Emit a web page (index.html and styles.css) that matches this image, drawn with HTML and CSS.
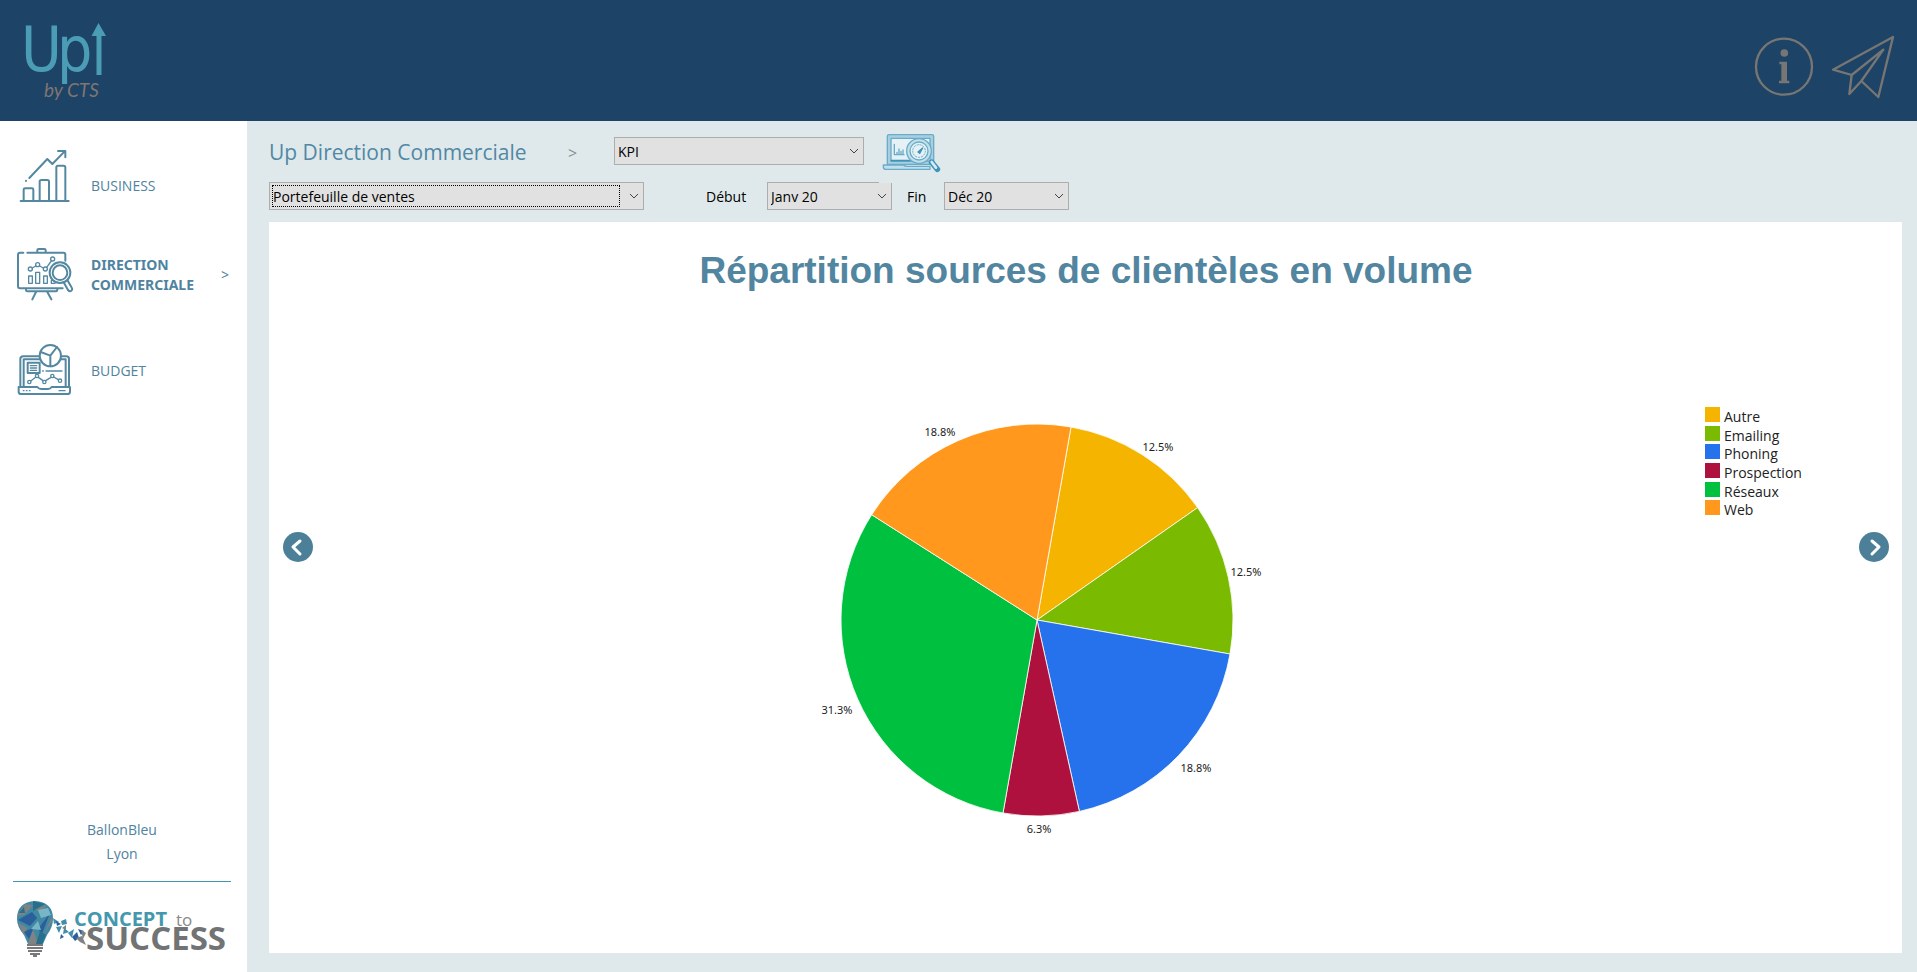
FILE: index.html
```html
<!DOCTYPE html>
<html lang="fr">
<head>
<meta charset="utf-8">
<title>Up Direction Commerciale</title>
<link rel="stylesheet" href="styles.css">
</head>
<body>
<div class="app">
  <header class="topbar">
    <a class="brand" href="#" aria-label="Up by CTS">
      <svg width="98" height="105" viewBox="12 5 98 105">
        <text class="brand-name" x="21" y="71">U</text>
        <text class="brand-name" x="57" y="71">p</text>
        <path class="brand-arrow" d="M98.500 23L106 36H101.500V75H96.500V36H91.500Z"/>
        <text class="brand-sub" x="44" y="97">by CTS</text>
      </svg>
    </a>
    <div class="topbar-actions">
      <button class="icon-button" type="button" aria-label="Informations">
        <svg width="60" height="62" viewBox="111 106 180 186">
          <circle cx="201" cy="198" r="84" fill="none" stroke="#777674" stroke-width="7"/>
          <circle cx="202" cy="157" r="11.500" fill="#777674"/>
          <path fill="#777674" d="M187 183H210V240H217V248H186V240H193V191H187Z"/>
        </svg>
      </button>
      <button class="icon-button" type="button" aria-label="Envoyer">
        <svg width="64" height="64" viewBox="339 102 192 192" fill="none" stroke="#777674" stroke-width="7" stroke-linejoin="round" stroke-linecap="round">
          <path d="M345 206L525 108L481 288L430 240L496 146L401 222ZM401 222L394 279L430 240"/>
        </svg>
      </button>
    </div>
  </header>

  <aside class="sidebar">
    <nav class="nav">
      <a class="nav-item nav-item-low" href="#">
        <svg class="nav-icon" width="55" height="58" viewBox="48 66 165 174">
          <path d="M62 228H206M71 227V194Q71 190 75 190H96Q100 190 100 194V227M119 227V170Q119 165 124 165H142Q147 165 147 170V227M169 227V127Q169 122 174 122H191Q196 122 196 127V227"/>
          <path d="M88 159L142 102L157 117L194 79M174 78H196V97M78 168V167"/>
        </svg>
        <span>BUSINESS</span>
      </a>
      <a class="nav-item nav-item-active" href="#" aria-current="page">
        <svg class="nav-icon" width="58" height="56" viewBox="48 364 174 168">
          <path d="M70 384H60Q54 384 54 390V485Q54 491 60 491H188M82 384H190Q196 384 196 390V408M112 383V377Q112 373 116 373H133Q137 373 137 377V383M78 491V496Q78 500 82 500H168Q172 500 172 493M108 502L97 524M142 502L154 524"/>
          <g stroke-width="4">
            <circle cx="91" cy="433" r="6"/><circle cx="113" cy="420" r="6"/><circle cx="136" cy="433" r="6"/><circle cx="158" cy="403" r="6"/>
            <path d="M97 430L107 424M119 424L130 430M140 428L154 409M86 454H97V476H86ZM107 443H119V476H107ZM131 454H142V476H131ZM154 467V476H165"/>
          </g>
          <circle cx="180" cy="444" r="31"/><circle cx="180" cy="444" r="22"/>
          <path d="M191 473L204 496Q209 502 214 498Q219 494 214 487L202 466"/>
        </svg>
        <span>DIRECTION COMMERCIALE</span>
        <span class="nav-mark">&gt;</span>
      </a>
      <a class="nav-item" href="#">
        <svg class="nav-icon" width="56" height="56" viewBox="48 654 168 168">
          <path d="M118 694H70Q61 694 61 702V784M183 694H199Q207 694 207 702V784M121 703H71V784M183 703H197V784M56 786H112Q116 792 124 792H144Q151 792 155 786H210V800Q210 807 202 807H64Q56 807 56 800Z"/>
          <circle cx="151" cy="692" r="32"/>
          <path d="M122 681L151 692L171 666M151 692V724M83 713H119V744H83Z"/>
          <g stroke-width="4">
            <path d="M91 722H110M91 729H110M91 736H110M138 738H186M128 738H130M70 797H72M79 797H81M88 797H90M177 797H195"/>
            <circle cx="88" cy="771" r="5"/><circle cx="111" cy="753" r="5"/><circle cx="133" cy="771" r="5"/><circle cx="157" cy="753" r="5"/><circle cx="180" cy="767" r="5"/>
            <path d="M92 768L107 757M115 757L129 767M137 767L153 757M161 756L175 764"/>
          </g>
        </svg>
        <span>BUDGET</span>
      </a>
    </nav>
    <div class="account">
      <p>BallonBleu</p>
      <p>Lyon</p>
    </div>
    <svg class="partner" width="216" height="62" viewBox="13 897 216 62" role="img" aria-label="Concept to Success">
      <path fill="#4189a3" d="M17 918Q17 901 35 900Q53 901 53 918Q53 926 47 934L43 943H28L24 934Q17 926 17 918Z"/>
      <path fill="#808284" d="M17 915L25 903L33 904L24 914ZM34 908L47 904L40 911ZM45 932L52 920L53 914L48 924ZM28 943L33 928L38 943ZM18 922L27 927L24 934Z"/>
      <path fill="#2a5f9c" d="M18 919L32 911L37 917L30 925ZM38 928L50 912L42 933ZM24 931L34 926L29 938Z"/>
      <path fill="#286f8b" d="M33 900L45 903L33 910ZM36 943L40 930L46 934L42 943ZM19 912L24 906L25 912Z"/>
      <path fill="#77b6c7" d="M38 909L48 907L51 914L41 917ZM31 928L38 920L41 929Z"/>
      <path stroke="#77797b" stroke-width="2" d="M27 944H43M27 947H43M28 950H42M30 953H40M33 955H37"/>
      <path fill="#3f8fab" d="M53 917L59 921L54 923ZM61 920L66 918L67 923L62 924ZM56 926L62 925L59 932ZM64 927L69 931L63 933ZM68 932L74 928L72 937Z"/>
      <path fill="#2a5f9c" d="M56 920L61 923L57 925ZM61 933L64 936L60 938ZM72 936L77 931L79 937L75 940ZM78 928L84 930L81 934Z"/>
      <path fill="#808284" d="M62 927L66 924L66 929ZM76 937L82 935L86 944L80 941ZM81 929L86 932L83 938Z"/>
      <text class="partner-top" x="74" y="925">CONCEPT</text>
      <text class="partner-to" x="176" y="925">to</text>
      <text class="partner-main" x="86" y="949">SUCCESS</text>
    </svg>
  </aside>

  <main class="content">
    <div class="filters">
      <div class="filter-row filter-row-top">
        <h1 class="page-title">Up Direction Commerciale</h1>
        <span class="crumb">&gt;</span>
        <div class="select select-view">
          <select aria-label="Vue"><option>KPI</option></select>
          <svg class="chevron" width="10" height="6" viewBox="0 0 10 6"><path d="M1 1L5 5L9 1"/></svg>
        </div>
        <button class="icon-button" type="button" aria-label="Analyser">
          <svg width="60" height="42" viewBox="636 40 180 126" fill="none" stroke="#69acca" stroke-width="4" stroke-linejoin="round" stroke-linecap="round">
            <path fill="#a9cfdf" d="M652 134V50Q652 45 657 45H786Q791 45 791 50V134Z"/>
            <path fill="#e6f1f5" d="M663 56H780V124H663Z"/>
            <path d="M664 123H720" stroke="#3f93b9" stroke-width="5"/>
            <path fill="#c3dfe9" d="M640 136H700Q704 140 712 140H780V149H648Q640 149 640 141Z"/>
            <path d="M673 74V105H702M681 104V98M687 104V88M693 104V95M699 104V91"/>
            <circle cx="747" cy="94" r="37" fill="#c3dfe9"/>
            <circle cx="747" cy="94" r="27" fill="#e6f1f5"/>
            <circle cx="747" cy="94" r="19" stroke-dasharray="4 5" stroke-width="3"/>
            <path d="M744 97L758 85L749 101Z" fill="#3f93b9" stroke="#3f93b9"/>
            <path d="M785 128L802 149" stroke="#3f93b9" stroke-width="17"/>
            <path d="M785 127L798 144" stroke="#d8eaf1" stroke-width="8"/>
          </svg>
        </button>
      </div>
      <div class="filter-row">
        <div class="select select-report">
          <select aria-label="Rapport"><option>Portefeuille de ventes</option></select>
          <svg class="chevron" width="10" height="6" viewBox="0 0 10 6"><path d="M1 1L5 5L9 1"/></svg>
        </div>
        <label class="date-label date-label-start" for="debut">Début</label>
        <div class="select select-date select-notched">
          <select id="debut"><option>Janv 20</option></select>
          <svg class="chevron" width="10" height="6" viewBox="0 0 10 6"><path d="M1 1L5 5L9 1"/></svg>
        </div>
        <label class="date-label date-label-end" for="fin">Fin</label>
        <div class="select select-date">
          <select id="fin"><option>Déc 20</option></select>
          <svg class="chevron" width="10" height="6" viewBox="0 0 10 6"><path d="M1 1L5 5L9 1"/></svg>
        </div>
      </div>
    </div>

    <section class="panel">
      <h2 class="chart-title">Répartition sources de clientèles en volume</h2>
      <div class="carousel">
        <button class="round-button" type="button" aria-label="Précédent">
          <svg width="30" height="30" viewBox="0 0 30 30"><path d="M17 9L10 15L17 22"/></svg>
        </button>
        <div class="chart">
          <svg width="460" height="440" viewBox="-230 -210 460 440" role="img" aria-label="Répartition en volume">
            <g class="slices">
              <path fill="#f4b400" d="M0 0L34.0 -193.0A196 196 0 0 1 160.6 -112.4Z"/>
              <path fill="#7aba00" d="M0 0L160.6 -112.4A196 196 0 0 1 193.0 34.0Z"/>
              <path fill="#2672ec" d="M0 0L193.0 34.0A196 196 0 0 1 42.4 191.4Z"/>
              <path fill="#ae113d" d="M0 0L42.4 191.4A196 196 0 0 1 -34.0 193.0Z"/>
              <path fill="#00c13f" d="M0 0L-34.0 193.0A196 196 0 0 1 -165.3 -105.3Z"/>
              <path fill="#ff981d" d="M0 0L-165.3 -105.3A196 196 0 0 1 34.0 -193.0Z"/>
            </g>
            <g class="slice-labels">
              <text x="121" y="-169">12.5%</text>
              <text x="209" y="-44">12.5%</text>
              <text x="159" y="152">18.8%</text>
              <text x="2" y="213">6.3%</text>
              <text x="-200" y="94">31.3%</text>
              <text x="-97" y="-184">18.8%</text>
            </g>
          </svg>
        </div>
        <ul class="legend">
          <li><i class="swatch autre"></i>Autre</li>
          <li><i class="swatch emailing"></i>Emailing</li>
          <li><i class="swatch phoning"></i>Phoning</li>
          <li><i class="swatch prospection"></i>Prospection</li>
          <li><i class="swatch reseaux"></i>Réseaux</li>
          <li><i class="swatch web"></i>Web</li>
        </ul>
        <button class="round-button" type="button" aria-label="Suivant">
          <svg width="30" height="30" viewBox="0 0 30 30"><path d="M13 9L20 15L13 22"/></svg>
        </button>
      </div>
    </section>
  </main>
</div>
</body>
</html>
```

FILE: styles.css
```css
* { box-sizing: border-box; }

body {
  margin: 0;
  font-family: "Open Sans", "Noto Sans", sans-serif;
  font-size: 14px;
  color: #000;
}

p, h1, h2, ul { margin: 0; padding: 0; }
svg { display: block; }

.app {
  display: grid;
  grid-template: auto 1fr / 247px 1fr;
  min-height: 100vh;
  background: #dfe9eb;
}

/* Top bar */
.topbar {
  grid-column: 1 / -1;
  display: flex;
  justify-content: space-between;
  align-items: flex-start;
  padding: 5px 22px 11px 12px;
  background: #1d4366;
}
.topbar-actions {
  display: flex;
  gap: 17px;
  padding-top: 30px;
}
.brand-name { font: 62px "DejaVu Sans Condensed", "DejaVu Sans", sans-serif; fill: #4a9db4; }
.brand-arrow { fill: #4a9db4; }
.brand-sub { font: italic 19px "Lato", sans-serif; fill: #7d7673; }
.icon-button { padding: 0; border: 0; background: none; cursor: pointer; }

/* Sidebar */
.sidebar {
  display: flex;
  flex-direction: column;
  padding: 26px 16px 12px 13px;
  background: #fff;
}
.nav { display: flex; flex-direction: column; gap: 41px; }
.nav-item {
  display: grid;
  grid-template-columns: 58px 1fr 10px;
  column-gap: 17px;
  align-items: center;
  padding-left: 3px;
  color: #4f83a0;
  line-height: 20px;
  text-decoration: none;
}
.nav-item-low span { padding-top: 20px; }
.nav-item-active { font-family: "Noto Sans", sans-serif; font-weight: 700; }
.nav-item-active span { padding-top: 2px; }
.nav-mark { font-weight: 400; }
.nav-icon {
  fill: none;
  stroke: #5488a1;
  stroke-width: 6;
  stroke-linecap: round;
  stroke-linejoin: round;
}
.account {
  margin-top: auto;
  padding-bottom: 15px;
  border-bottom: 1px solid #4297ad;
  color: #4f83a0;
  line-height: 24px;
  text-align: center;
}
.partner { margin-top: 16px; }
.partner-top { font: 700 20px "Open Sans", sans-serif; fill: #4398ae; }
.partner-to { font: 400 17px "Open Sans", sans-serif; fill: #888; }
.partner-main { font: 700 33px "Open Sans", sans-serif; fill: #727374; }

/* Filters */
.content {
  display: flex;
  flex-direction: column;
  padding: 12px 15px 19px 22px;
}
.filters { display: flex; flex-direction: column; gap: 7px; }
.filter-row { display: flex; align-items: center; }
.filter-row-top { align-items: flex-start; }
.page-title { width: 299px; padding-top: 4px; font-size: 21px; font-weight: 400; line-height: 30px; color: #5188a4; white-space: nowrap; }
.crumb { width: 46px; padding-top: 4px; font-size: 16px; line-height: 32px; color: #8b8f91; }
.select { position: relative; }
.select select {
  appearance: none;
  display: block;
  width: 100%;
  height: 28px;
  padding: 0 24px 0 3px;
  border: 1px solid #adadad;
  border-radius: 0;
  background: #e1e1e1;
  color: #000;
  font: inherit;
}
.select-view { width: 250px; margin: 4px 18px 0 0; }
.select-report { width: 375px; }
.select-date { width: 125px; }
.chevron {
  position: absolute;
  top: 11px;
  right: 5px;
  fill: none;
  stroke: #444;
  pointer-events: none;
}
.select-report::after {
  content: "";
  position: absolute;
  inset: 3px 24px 3px 3px;
  border: 1px dotted #000;
  pointer-events: none;
}
.select-notched::after {
  content: "";
  position: absolute;
  top: 0;
  right: 0;
  width: 13px;
  height: 1px;
  background: #dfe9eb;
}
.date-label-start { width: 61px; margin-left: 62px; }
.date-label-end { width: 37px; margin-left: 15px; }

/* Chart panel */
.panel { flex: 1; margin-top: 12px; padding: 27px 13px 0 14px; background: #fff; }
.chart-title {
  font: 700 37px/44px "Liberation Sans", Arial, sans-serif;
  color: #5185a0;
  text-align: center;
}
.carousel {
  display: grid;
  grid-template-columns: 30px 1fr 154px 30px;
  align-items: start;
  padding-top: 114px;
}
.round-button {
  margin-top: 125px;
  padding: 0;
  border: 0;
  border-radius: 50%;
  background: #4c8099;
  cursor: pointer;
}
.round-button path {
  fill: none;
  stroke: #fff;
  stroke-width: 3;
  stroke-linecap: round;
  stroke-linejoin: round;
}
.chart { display: flex; justify-content: center; padding: 3px 0 0 56px; }
.slices path { stroke: #fff; stroke-opacity: .8; stroke-width: 1; }
.slice-labels { font: 11px "Noto Sans", sans-serif; fill: #222; text-anchor: middle; }
.legend {
  display: grid;
  grid-auto-rows: minmax(0, 1fr);
  height: 112px;
  list-style: none;
  color: #222;
  line-height: 20px;
}
.legend li { display: flex; gap: 4px; }
.swatch { width: 15px; height: 15px; }
.autre { background: #f4b400; }
.emailing { background: #7aba00; }
.phoning { background: #2672ec; }
.prospection { background: #ae113d; }
.reseaux { background: #00c13f; }
.web { background: #ff981d; }
```
